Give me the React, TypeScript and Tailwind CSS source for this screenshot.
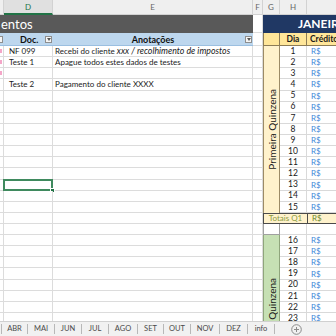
import React from 'react';

const gl = 'border-b border-r border-[#dcdcdc] bg-white';

function FilterBtn() {
  return (
    <div className="w-[7px] h-[7px] bg-[#f5f5f5] border border-[#8e8e8e] flex items-center justify-center shrink-0">
      <svg width="4" height="3" viewBox="0 0 4 3">
        <path d="M0 0 L4 0 L2 3 Z" fill="#555" />
      </svg>
    </div>
  );
}

const leftData: [string, React.ReactNode][] = [
  ['NF 099', <span>Recebi do cliente <i className="text-[8.8px]">xxx / recolhimento de impostos</i></span>],
  ['Teste 1', 'Apague todos estes dados de testes'],
  ['', ''],
  ['Teste 2', 'Pagamento do cliente XXXX'],
];

const tabs: [string, string][] = [
  ['ABR', 'w-[25px]'],
  ['MAI', 'w-[26px]'],
  ['JUN', 'w-[26px]'],
  ['JUL', 'w-[26px]'],
  ['AGO', 'w-[28px]'],
  ['SET', 'w-[25px]'],
  ['OUT', 'w-[26px]'],
  ['NOV', 'w-[28px]'],
  ['DEZ', 'w-[27px]'],
  ['info', 'w-[26px]'],
];

function LeftCells({ i }: { i: number }) {
  const d = i >= 0 && i < leftData.length ? leftData[i] : ['', ''];
  const pink = i >= 0 && i < 3;
  const selected = i === 12;
  return (
    <>
      <div className={`${gl} flex items-center`}>
        {pink && <div className="w-[2px] h-[4px] bg-[#f4a6c8]" />}
      </div>
      <div className={`${gl} relative flex items-center pl-[5px] whitespace-nowrap overflow-visible`}>
        {d[0]}
        {selected && (
          <>
            <div className="absolute -top-[1px] -left-[1px] -right-[1px] -bottom-[1px] border-2 border-[#3f8a5e]" />
            <div className="absolute -bottom-[3px] -right-[3px] w-[5px] h-[5px] bg-[#217346] border border-white" />
          </>
        )}
      </div>
      <div className={`${gl} flex items-center pl-[2px] whitespace-nowrap overflow-hidden`}>{d[1]}</div>
      <div className={gl} />
    </>
  );
}

export default function App() {
  const first = Array.from({ length: 15 }, (_, k) => k);
  const second = Array.from({ length: 15 }, (_, k) => k);
  return (
    <div className="w-[336px] h-[336px] overflow-hidden bg-white flex flex-col font-['Lato','Liberation_Sans',sans-serif] text-[#1a1a1a]">
      {/* column letters */}
      <div className="flex h-[15px] shrink-0 bg-[#efefef] text-[8px] text-[#666]">
        <div className="w-[4px] border-r border-b border-[#d2d2d2]" />
        <div className="w-[49px] bg-[#e0e0e0] border-r border-[#d2d2d2] border-b-2 border-b-[#217346] flex items-center justify-center text-[#217346]">D</div>
        <div className="w-[200px] border-r border-b border-[#d2d2d2] flex items-center justify-center">E</div>
        <div className="w-[10px] border-r border-b border-[#d2d2d2] flex items-center justify-center">F</div>
        <div className="w-[17px] border-r border-b border-[#d2d2d2] flex items-center justify-center">G</div>
        <div className="w-[27px] border-r border-b border-[#d2d2d2] flex items-center justify-center">H</div>
        <div className="w-[29px] border-b border-[#d2d2d2]" />
      </div>

      {/* sheet */}
      <div className="flex-1 overflow-hidden">
        <div className="grid grid-cols-[4px_49px_200px_10px_17px_27px_29px] grid-rows-[18px_13px_repeat(15,11.133px)_11.2px_11px_repeat(15,11.133px)] text-[8px] leading-none">
          {/* title row */}
          <div className="col-span-3 bg-[#595959] text-white text-[13px] flex items-center pl-[1px] whitespace-nowrap overflow-hidden">entos</div>
          <div className={gl} />
          <div className="col-span-3 bg-[#203864] text-white text-[12px] font-bold flex items-center pl-[35px] whitespace-nowrap overflow-hidden">JANEIRO</div>

          {/* header row */}
          <div className="bg-[#bdd7ee] border-b border-[#9bbfe0] flex items-center">
            <div className="w-[3px] h-[7px] bg-[#f5f5f5] border-y border-r border-[#8e8e8e]" />
          </div>
          <div className="bg-[#bdd7ee] border-b border-[#9bbfe0] flex items-center pl-[16px] pr-[1px]">
            <span className="font-bold text-[9px] text-[#111]">Doc.</span>
            <div className="ml-auto"><FilterBtn /></div>
          </div>
          <div className="bg-[#bdd7ee] border-b border-[#9bbfe0] flex items-center pr-[1px]">
            <span className="flex-1 text-center pl-[8px] font-bold text-[9px] text-[#111]">Anotações</span>
            <FilterBtn />
          </div>
          <div className={gl} />
          <div className="bg-[#ffe699] border-l border-r border-b border-[#8c7b55]" />
          <div className="bg-[#ffe699] border-r border-b border-[#8c7b55] flex items-center justify-center font-bold text-[8.5px]">Dia</div>
          <div className="bg-[#ffe699] border-b border-[#8c7b55] flex items-center pl-[3px] font-bold text-[8.5px] whitespace-nowrap overflow-hidden">Crédito</div>

          {/* first quinzena */}
          {first.map((k) => (
            <React.Fragment key={'a' + k}>
              <LeftCells i={k} />
              {k === 0 && (
                <div className="row-span-15 bg-[#fff2cc] border-l border-r border-[#9c8b66] flex items-center justify-center">
                  <span className="[writing-mode:vertical-rl] rotate-180 text-[10px] whitespace-nowrap">Primeira Quinzena</span>
                </div>
              )}
              <div className="bg-white border-b border-r border-[#d9d9d9] flex items-center justify-center text-[8.5px]">{k + 1}</div>
              <div className="bg-white border-b border-[#d9d9d9] flex items-center pl-[4px] text-[#3f8ad8]">R$</div>
            </React.Fragment>
          ))}

          {/* totals row */}
          <LeftCells i={15} />
          <div className="col-span-2 bg-[#fff2cc] border-y border-l border-[#4a4a4a] flex items-center justify-center text-[#8a9a3e] whitespace-nowrap">Totais Q1</div>
          <div className="bg-[#fff2cc] border-y border-l border-[#4a4a4a] flex items-center pl-[4px] text-[#6e8a2c]">R$</div>

          {/* blank row */}
          <LeftCells i={16} />
          <div className="bg-white border-l border-r border-b border-[#a0a0a0]" />
          <div className="bg-white border-b border-r border-[#d9d9d9]" />
          <div className="bg-white border-b border-[#d9d9d9]" />

          {/* second quinzena */}
          {second.map((k) => (
            <React.Fragment key={'b' + k}>
              <LeftCells i={17 + k} />
              {k === 0 && (
                <div className="row-span-15 bg-[#c6e0b4] border-l border-r border-[#8fa57c] flex items-center justify-center">
                  <span className="[writing-mode:vertical-rl] rotate-180 text-[10px] whitespace-nowrap">Segunda Quinzena</span>
                </div>
              )}
              <div className="bg-white border-b border-r border-[#d9d9d9] flex items-center justify-center text-[8.5px]">{k + 16}</div>
              <div className="bg-white border-b border-[#d9d9d9] flex items-center pl-[4px] text-[#3f8ad8]">R$</div>
            </React.Fragment>
          ))}
        </div>
      </div>

      {/* sheet tabs */}
      <div className="h-[15px] shrink-0 flex items-center bg-[#f1f1f1] border-t border-[#d0d0d0] text-[7.5px] text-[#4a4a4a]">
        <div className="w-[1px]" />
        <div className="w-px h-[10px] bg-[#b8b8b8]" />
        {tabs.map(([t, w]) => (
          <React.Fragment key={t}>
            <div className={`${w} flex items-center justify-center`}>{t}</div>
            <div className="w-px h-[10px] bg-[#b8b8b8]" />
          </React.Fragment>
        ))}
        <div className="ml-[16px]">
          <svg width="11" height="11" viewBox="0 0 11 11">
            <circle cx="5.5" cy="5.5" r="4.8" fill="none" stroke="#8a8a8a" strokeWidth="1" />
            <path d="M5.5 3 V8 M3 5.5 H8" stroke="#8a8a8a" strokeWidth="1" />
          </svg>
        </div>
      </div>
    </div>
  );
}
